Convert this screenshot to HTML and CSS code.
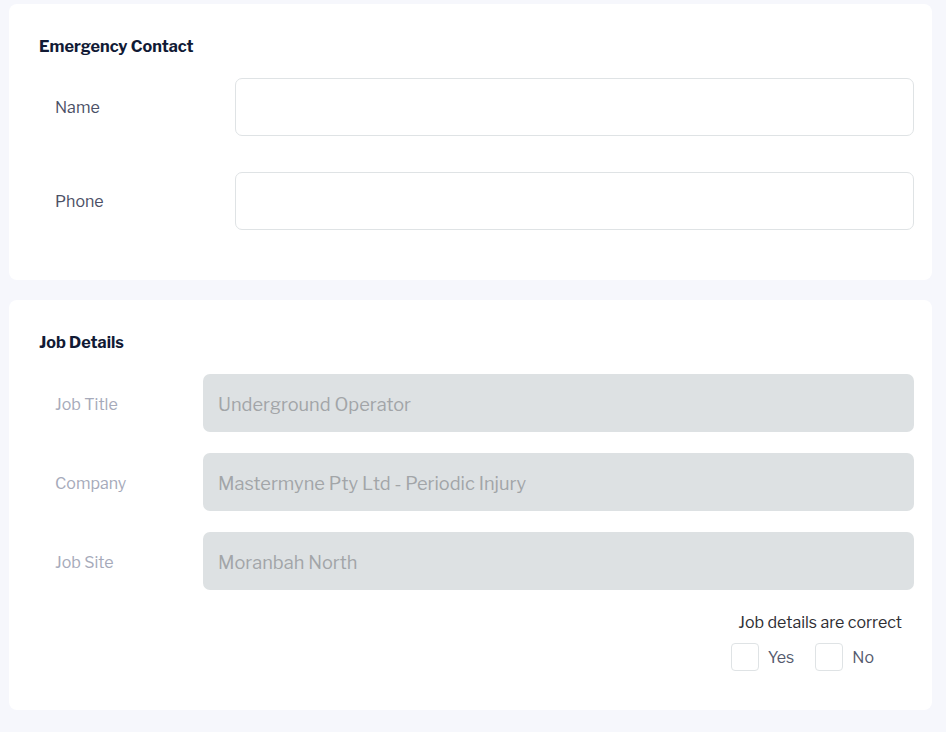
FILE: index.html
```html
<!DOCTYPE html>
<html lang="en">
<head>
<meta charset="utf-8">
<title>Form</title>
<link rel="stylesheet" href="styles.css">
</head>
<body>
<div class="page">
  <section class="card card-contact">
    <h2 class="card-title">Emergency Contact</h2>
    <div class="field-row">
      <label class="field-label">Name</label>
      <div class="input"></div>
    </div>
    <div class="field-row">
      <label class="field-label">Phone</label>
      <div class="input"></div>
    </div>
  </section>
  <section class="card card-job">
    <h2 class="card-title">Job Details</h2>
    <div class="field-row job-row">
      <label class="field-label muted">Job Title</label>
      <div class="input disabled">Underground Operator</div>
    </div>
    <div class="field-row job-row">
      <label class="field-label muted">Company</label>
      <div class="input disabled">Mastermyne Pty Ltd - Periodic Injury</div>
    </div>
    <div class="field-row job-row">
      <label class="field-label muted">Job Site</label>
      <div class="input disabled">Moranbah North</div>
    </div>
    <div class="confirm">
      <div class="confirm-title">Job details are correct</div>
      <div class="confirm-options">
        <span class="option"><span class="checkbox"></span>Yes</span>
        <span class="option"><span class="checkbox"></span>No</span>
      </div>
    </div>
  </section>
</div>
</body>
</html>
```
FILE: styles.css
```css
html, body {
  margin: 0;
  padding: 0;
  background: #f6f7fc;
  font-family: "Libre Franklin", Inter, "Open Sans", sans-serif;
}
.page {
  padding: 4px 14px 20px 9px;
  display: flex;
  flex-direction: column;
  gap: 20px;
}
.card {
  background: #ffffff;
  border-radius: 8px;
  padding: 30px 18px 50px 30px;
}
.card-job {
  padding-bottom: 39px;
}
.card-title {
  margin: 0 0 20px 0;
  font-size: 16.2px;
  line-height: 24px;
  font-weight: 700;
  color: #111a35;
  height: 24px;
}
.field-row {
  display: flex;
  align-items: center;
}
.field-row + .field-row {
  margin-top: 36px;
}
.job-row + .job-row {
  margin-top: 21px;
}
.field-label {
  width: 180px;
  flex: 0 0 180px;
  padding-left: 16px;
  font-size: 16px;
  color: #4b5066;
}
.job-row .field-label {
  width: 148px;
  flex: 0 0 148px;
}
.field-label.muted {
  color: #a6aaba;
  padding-top: 2px;
}
.input {
  flex: 1;
  height: 56px;
  border: 1px solid #dfe3e5;
  border-radius: 7px;
  background: #fff;
  box-sizing: content-box;
}
.input.disabled {
  height: 58px;
  border: none;
  background: #dde1e3;
  color: #a2a5a8;
  font-size: 18.2px;
  line-height: 60px;
  overflow: hidden;
  padding-left: 15px;
}
.confirm {
  margin-top: 20px;
  display: flex;
  flex-direction: column;
  align-items: flex-end;
  padding-right: 12px;
}
.confirm-title {
  font-size: 16px;
  line-height: 24px;
  color: #2e2e33;
  padding-top: 1px;
  height: 23px;
}
.confirm-options {
  display: flex;
  gap: 21px;
  margin-top: 9px;
  margin-right: 28px;
}
.option {
  display: flex;
  align-items: center;
  gap: 9px;
  font-size: 16px;
  color: #555a6e;
}
.checkbox {
  width: 26px;
  height: 26px;
  border: 1px solid #dfe3e5;
  border-radius: 4px;
  background: #fff;
}
```
